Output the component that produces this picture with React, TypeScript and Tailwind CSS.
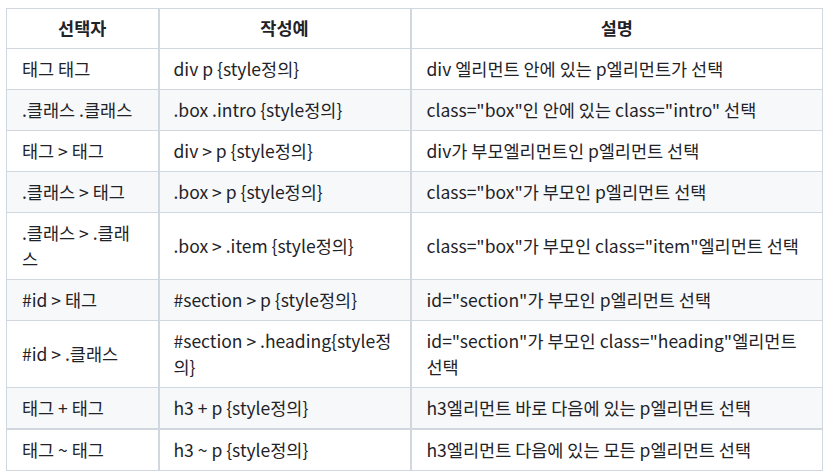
import React from 'react';

interface Row {
  selector: string;
  example: string;
  desc: string;
}

const rows: Row[] = [
  { selector: '태그 태그', example: 'div p {style정의}', desc: 'div 엘리먼트 안에 있는 p엘리먼트가 선택' },
  { selector: '.클래스 .클래스', example: '.box .intro {style정의}', desc: 'class="box"인 안에 있는 class="intro" 선택' },
  { selector: '태그 > 태그', example: 'div > p {style정의}', desc: 'div가 부모엘리먼트인 p엘리먼트 선택' },
  { selector: '.클래스 > 태그', example: '.box > p {style정의}', desc: 'class="box"가 부모인 p엘리먼트 선택' },
  { selector: '.클래스 > .클래스', example: '.box > .item {style정의}', desc: 'class="box"가 부모인 class="item"엘리먼트 선택' },
  { selector: '#id > 태그', example: '#section > p {style정의}', desc: 'id="section"가 부모인 p엘리먼트 선택' },
  { selector: '#id > .클래스', example: '#section > .heading{style정의}', desc: 'id="section"가 부모인 class="heading"엘리먼트 선택' },
  { selector: '태그 + 태그', example: 'h3 + p {style정의}', desc: 'h3엘리먼트 바로 다음에 있는 p엘리먼트 선택' },
  { selector: '태그 ~ 태그', example: 'h3 ~ p {style정의}', desc: 'h3엘리먼트 다음에 있는 모든 p엘리먼트 선택' },
];

const App: React.FC = () => {
  return (
    <div className="min-h-[476px] bg-white pt-[8px] pl-[6px] text-[#1f2328] font-['Noto_Sans_CJK_KR',sans-serif] text-[17.5px] leading-[26px]">
      <table className="w-[817px] table-fixed border-collapse">
        <colgroup>
          <col className="w-[152px]" />
          <col className="w-[252px]" />
          <col />
        </colgroup>
        <thead>
          <tr className="bg-white">
            <th className="border border-[#d0d7de] px-[14px] pt-[6px] pb-[7px] text-center font-bold">선택자</th>
            <th className="border border-x-2 border-[#d0d7de] px-[14px] pt-[6px] pb-[7px] text-center font-bold">작성예</th>
            <th className="border border-[#d0d7de] px-[14px] pt-[6px] pb-[7px] text-center font-bold">설명</th>
          </tr>
        </thead>
        <tbody>
          {rows.map((r, i) => (
            <tr key={i} className={i % 2 === 1 ? 'bg-[#f6f8fa]' : 'bg-white'}>
              <td className={`border border-[#d0d7de] px-[15px] py-[7px] ${i === 8 ? 'border-t-2' : ''}`}>{r.selector}</td>
              <td className={`border border-x-2 border-[#d0d7de] px-[14px] py-[7px] ${i === 8 ? 'border-t-2' : ''}`}>{r.example}</td>
              <td className={`border border-[#d0d7de] px-[15px] py-[7px] ${i === 8 ? 'border-t-2' : ''}`}>{r.desc}</td>
            </tr>
          ))}
        </tbody>
      </table>
    </div>
  );
};

export default App;
